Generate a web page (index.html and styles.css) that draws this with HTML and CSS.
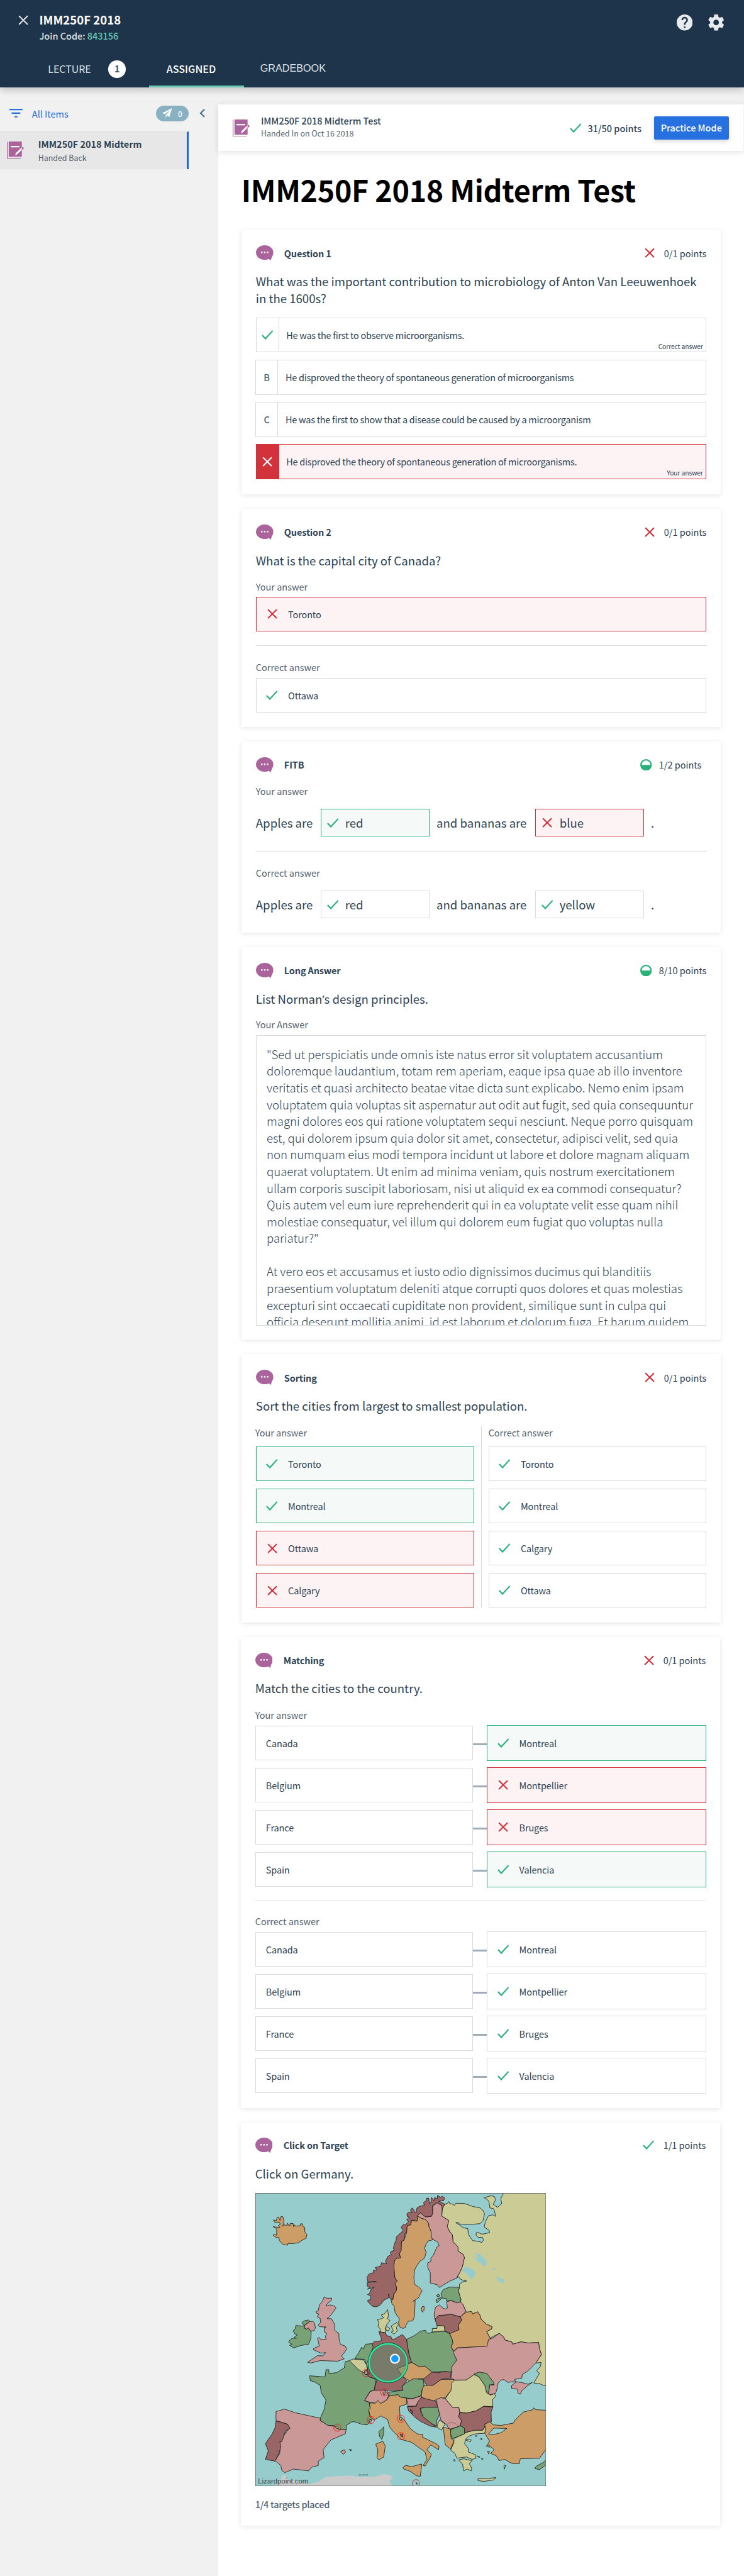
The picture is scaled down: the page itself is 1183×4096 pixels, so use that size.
FILE: index.html
```html
<!DOCTYPE html>
<html lang="en">
<head>
<meta charset="utf-8">
<title>IMM250F 2018 Midterm Test</title>
<link rel="stylesheet" href="styles.css">
</head>
<body>
<svg class="sprite" width="0" height="0" aria-hidden="true">
  <symbol id="cross" viewBox="0 0 28 28"><path d="M2 2 26 26M26 2 2 26" fill="none" stroke="currentColor" stroke-width="3.6"/></symbol>
  <symbol id="check" viewBox="0 0 32 26"><path d="M1.5 14 10.500 23.500 30.500 1.500" fill="none" stroke="currentColor" stroke-width="3.8"/></symbol>
  <symbol id="half" viewBox="0 0 32 32"><circle cx="16" cy="16" r="14" fill="#fff" stroke="currentColor" stroke-width="4"/><path d="M1 16H31A15 15 0 0 1 1 16Z" fill="currentColor"/></symbol>
  <symbol id="bubble" viewBox="0 0 48 42"><ellipse cx="24" cy="20" rx="24" ry="20" fill="#aa649b"/><path d="M34 36 40.500 42 46 26Z" fill="#aa649b"/><path d="M14 17.500h4v4h-4zM22 17.500h4v4h-4zM30 17.500h4v4h-4z" fill="#fff"/></symbol>
  <symbol id="quiz" viewBox="0 0 48 48"><rect x="5" width="36" height="42" rx="1" fill="#aa649b"/><path d="M1 1V46.500H38" fill="none" stroke="#aa649b" stroke-width="2"/><path d="M10.500 14H34.500" stroke="#fff" stroke-width="4"/><path d="M22.500 38 24.500 32 41 15.500V22.500L27.500 36Z" fill="#fff"/><path d="M41 16.500 43.500 14.500 47 18 41 24Z" fill="#aa649b"/></symbol>
</svg>

<header class="top">
  <div class="brand">
    <svg class="close"><use href="#cross"/></svg>
    <div class="course">
      <div class="course-name">IMM250F 2018</div>
      <div class="join">Join Code: <span class="code">843156</span></div>
    </div>
    <svg class="top-icon" viewBox="2 2 20 20"><path fill="currentColor" d="M12 2C6.480 2 2 6.480 2 12s4.480 10 10 10 10-4.480 10-10S17.520 2 12 2zm1 17h-2v-2h2v2zm2.070-7.750l-.9.920C13.450 12.900 13 13.500 13 15h-2v-.5c0-1.100.45-2.100 1.170-2.830l1.240-1.260c.37-.36.59-.86.59-1.410 0-1.100-.9-2-2-2s-2 .9-2 2H8c0-2.210 1.790-4 4-4s4 1.790 4 4c0 .88-.36 1.680-.93 2.250z"/></svg>
    <svg class="top-icon" viewBox="2 2 20 20"><path fill="currentColor" d="M19.430 12.980c.04-.32.07-.64.07-.98s-.03-.66-.07-.98l2.110-1.650c.19-.15.24-.42.12-.64l-2-3.460c-.12-.22-.39-.3-.61-.22l-2.490 1c-.52-.4-1.080-.73-1.690-.98l-.38-2.650C14.460 2.180 14.250 2 14 2h-4c-.25 0-.46.18-.49.42l-.38 2.650c-.61.25-1.170.59-1.690.98l-2.490-1c-.23-.09-.49 0-.61.22l-2 3.460c-.13.22-.07.49.12.64l2.110 1.650c-.04.32-.07.65-.07.98s.03.66.07.98l-2.110 1.650c-.19.15-.24.42-.12.64l2 3.460c.12.22.39.3.61.22l2.490-1c.52.4 1.080.73 1.690.98l.38 2.650c.03.24.24.42.49.42h4c.25 0 .46-.18.49-.42l.38-2.650c.61-.25 1.170-.59 1.690-.98l2.490 1c.23.09.49 0 .61-.22l2-3.460c.12-.22.07-.49-.12-.64l-2.110-1.650zM12 15.500c-1.930 0-3.500-1.570-3.500-3.500s1.570-3.500 3.500-3.500 3.500 1.570 3.500 3.500-1.570 3.500-3.500 3.500z"/></svg>
  </div>
  <nav class="tabs">
    <div class="tab tab-lecture">LECTURE<span class="count">1</span></div>
    <div class="tab tab-assigned">ASSIGNED</div>
    <div class="tab tab-grade">GRADEBOOK</div>
  </nav>
</header>

<div class="body">
  <aside class="side">
    <div class="filter">
      <svg class="filter-icon" viewBox="0 0 36 24"><path fill="#2670e0" d="M0 0h36v4H0zM6 10h24v4H6zM14 20h8v4h-8z"/></svg>
      <span class="filter-label">All Items</span>
      <span class="pill"><svg class="plane" viewBox="0 0 28 28"><path fill="#fff" d="M28 0 0 14 7 17 24 5 11 18.500 20 25Z M9 18 13 20.500 10.500 28Z"/></svg>0</span>
      <svg class="chev" viewBox="0 0 16 24"><path d="M14 1.500 3.500 12 14 22.500" fill="none" stroke="#4b7690" stroke-width="4"/></svg>
    </div>
    <div class="item">
      <svg class="quiz-icon"><use href="#quiz"/></svg>
      <div>
        <div class="item-name">IMM250F 2018 Midterm</div>
        <div class="item-sub">Handed Back</div>
      </div>
    </div>
  </aside>

  <main class="main">
    <div class="docbar">
      <svg class="quiz-icon"><use href="#quiz"/></svg>
      <div class="doc-info">
        <div class="doc-name">IMM250F 2018 Midterm Test</div>
        <div class="doc-sub">Handed In on Oct 16 2018</div>
      </div>
      <svg class="check"><use href="#check"/></svg>
      <span class="doc-points">31/50 points</span>
      <span class="button">Practice Mode</span>
    </div>
    <div class="page">
      <h1 class="title">IMM250F 2018 Midterm Test</h1>

      <section class="card card-choice">
        <div class="head"><svg class="bubble"><use href="#bubble"/></svg><span class="name">Question 1</span><svg class="cross"><use href="#cross"/></svg><span class="points">0/1 points</span></div>
        <p class="question">What was the important contribution to microbiology of Anton Van Leeuwenhoek<br>in the 1600s?</p>
        <div class="options">
          <div class="option"><span class="key"><svg class="check"><use href="#check"/></svg></span><span class="option-text">He was the first to observe microorganisms.</span><span class="note">Correct answer</span></div>
          <div class="option option-plain"><span class="key">B</span><span class="option-text">He disproved the theory of spontaneous generation of microorganisms</span></div>
          <div class="option option-plain"><span class="key">C</span><span class="option-text">He was the first to show that a disease could be caused by a microorganism</span></div>
          <div class="option option-wrong"><span class="key"><svg class="cross"><use href="#cross"/></svg></span><span class="option-text">He disproved the theory of spontaneous generation of microorganisms.</span><span class="note">Your answer</span></div>
        </div>
      </section>

      <section class="card card-short">
        <div class="head"><svg class="bubble"><use href="#bubble"/></svg><span class="name">Question 2</span><svg class="cross"><use href="#cross"/></svg><span class="points">0/1 points</span></div>
        <p class="question">What is the capital city of Canada?</p>
        <div class="label label-first">Your answer</div>
        <div class="box wrong"><svg class="cross"><use href="#cross"/></svg>Toronto</div>
        <div class="rule"></div>
        <div class="label">Correct answer</div>
        <div class="box"><svg class="check"><use href="#check"/></svg>Ottawa</div>
      </section>

      <section class="card card-fitb">
        <div class="head"><svg class="bubble"><use href="#bubble"/></svg><span class="name">FITB</span><svg class="half"><use href="#half"/></svg><span class="points points-part">1/2 points</span></div>
        <div class="label label-fitb">Your answer</div>
        <div class="blanks"><span>Apples are</span><span class="blank right"><svg class="check"><use href="#check"/></svg>red</span><span class="mid">and bananas are</span><span class="blank wrong"><svg class="cross"><use href="#cross"/></svg>blue</span><span class="mid">.</span></div>
        <div class="rule rule-fitb"></div>
        <div class="label">Correct answer</div>
        <div class="blanks"><span>Apples are</span><span class="blank"><svg class="check"><use href="#check"/></svg>red</span><span class="mid">and bananas are</span><span class="blank"><svg class="check"><use href="#check"/></svg>yellow</span><span class="mid">.</span></div>
      </section>

      <section class="card card-long">
        <div class="head"><svg class="bubble"><use href="#bubble"/></svg><span class="name">Long Answer</span><svg class="half"><use href="#half"/></svg><span class="points points-part">8/10 points</span></div>
        <p class="question">List Norman<span class="apos">’</span>s design principles.</p>
        <div class="label label-first">Your Answer</div>
        <div class="essay">"Sed ut perspiciatis unde omnis iste natus error sit voluptatem accusantium<br>doloremque laudantium, totam rem aperiam, eaque ipsa quae ab illo inventore<br>veritatis et quasi architecto beatae vitae dicta sunt explicabo. Nemo enim ipsam<br>voluptatem quia voluptas sit aspernatur aut odit aut fugit, sed quia consequuntur<br>magni dolores eos qui ratione voluptatem sequi nesciunt. Neque porro quisquam<br>est, qui dolorem ipsum quia dolor sit amet, consectetur, adipisci velit, sed quia<br>non numquam eius modi tempora incidunt ut labore et dolore magnam aliquam<br>quaerat voluptatem. Ut enim ad minima veniam, quis nostrum exercitationem<br>ullam corporis suscipit laboriosam, nisi ut aliquid ex ea commodi consequatur?<br>Quis autem vel eum iure reprehenderit qui in ea voluptate velit esse quam nihil<br>molestiae consequatur, vel illum qui dolorem eum fugiat quo voluptas nulla<br>pariatur?"<br><br>At vero eos et accusamus et iusto odio dignissimos ducimus qui blanditiis<br>praesentium voluptatum deleniti atque corrupti quos dolores et quas molestias<br>excepturi sint occaecati cupiditate non provident, similique sunt in culpa qui<br>officia deserunt mollitia animi, id est laborum et dolorum fuga. Et harum quidem</div>
      </section>

      <section class="card card-sort">
        <div class="head"><svg class="bubble"><use href="#bubble"/></svg><span class="name">Sorting</span><svg class="cross"><use href="#cross"/></svg><span class="points">0/1 points</span></div>
        <p class="question">Sort the cities from largest to smallest population.</p>
        <div class="columns">
          <div class="column">
            <div class="label label-out">Your answer</div>
            <div class="box right"><svg class="check"><use href="#check"/></svg>Toronto</div>
            <div class="box right"><svg class="check"><use href="#check"/></svg>Montreal</div>
            <div class="box wrong"><svg class="cross"><use href="#cross"/></svg>Ottawa</div>
            <div class="box wrong"><svg class="cross"><use href="#cross"/></svg>Calgary</div>
          </div>
          <div class="split"></div>
          <div class="column">
            <div class="label">Correct answer</div>
            <div class="box"><svg class="check"><use href="#check"/></svg>Toronto</div>
            <div class="box"><svg class="check"><use href="#check"/></svg>Montreal</div>
            <div class="box"><svg class="check"><use href="#check"/></svg>Calgary</div>
            <div class="box"><svg class="check"><use href="#check"/></svg>Ottawa</div>
          </div>
        </div>
      </section>

      <section class="card card-match">
        <div class="head"><svg class="bubble"><use href="#bubble"/></svg><span class="name">Matching</span><svg class="cross"><use href="#cross"/></svg><span class="points">0/1 points</span></div>
        <p class="question">Match the cities to the country.</p>
        <div class="label label-match">Your answer</div>
        <div class="pairs">
          <div class="pair"><div class="box">Canada</div><div class="link"></div><div class="box right"><svg class="check"><use href="#check"/></svg>Montreal</div></div>
          <div class="pair"><div class="box">Belgium</div><div class="link"></div><div class="box wrong"><svg class="cross"><use href="#cross"/></svg>Montpellier</div></div>
          <div class="pair"><div class="box">France</div><div class="link"></div><div class="box wrong"><svg class="cross"><use href="#cross"/></svg>Bruges</div></div>
          <div class="pair"><div class="box">Spain</div><div class="link"></div><div class="box right"><svg class="check"><use href="#check"/></svg>Valencia</div></div>
        </div>
        <div class="rule rule-match"></div>
        <div class="label label-match2">Correct answer</div>
        <div class="pairs">
          <div class="pair"><div class="box">Canada</div><div class="link"></div><div class="box"><svg class="check"><use href="#check"/></svg>Montreal</div></div>
          <div class="pair"><div class="box">Belgium</div><div class="link"></div><div class="box"><svg class="check"><use href="#check"/></svg>Montpellier</div></div>
          <div class="pair"><div class="box">France</div><div class="link"></div><div class="box"><svg class="check"><use href="#check"/></svg>Bruges</div></div>
          <div class="pair"><div class="box">Spain</div><div class="link"></div><div class="box"><svg class="check"><use href="#check"/></svg>Valencia</div></div>
        </div>
      </section>

      <section class="card card-target">
        <div class="head"><svg class="bubble"><use href="#bubble"/></svg><span class="name">Click on Target</span><svg class="check"><use href="#check"/></svg><span class="points">1/1 points</span></div>
        <p class="question">Click on Germany.</p>
        <svg class="map" viewBox="36 42 2400 2420" preserveAspectRatio="none">
          <rect x="36" y="42" width="2400" height="2420" fill="#97cccc"/>
          <g class="land">
            <path class="k" d="M2085 42 2072 70 2062 90 2070 130 2036 160 2005 140 1998 135 2020 100 2010 72 1985 65 1960 70 1925 82 1950 95 1965 115 1972 165 2000 170 2010 190 2020 235 1995 222 1960 230 1935 280 1925 322 1965 350 1970 368 1945 375 1905 382 1870 365 1860 370 1858 390 1875 408 1910 408 1920 430 1905 450 1870 440 1830 435 1805 400 1793 375 1790 335 1755 330 1720 305 1690 287 1712 283 1720 298 1800 302 1890 295 1915 270 1928 215 1915 185 1890 165 1830 153 1760 128 1690 127 1680 145 1665 135 1640 128 1633 112 1625 125 1600 135 1580 165 1575 232 1632 268 1620 320 1640 360 1663 388 1668 450 1690 465 1710 490 1708 520 1750 548 1762 575 1745 650 1720 705 1695 745 1715 732 1725 750 1745 760 1780 768 1750 775 1720 795 1722 820 1712 850 1733 920 1730 940 1748 960 1775 1020 1785 1030 1820 1020 1830 1040 1870 1022 1890 1050 1900 1085 1945 1125 1990 1145 1985 1165 1945 1185 1975 1240 2000 1225 2050 1200 2085 1230 2096 1255 2152 1270 2160 1290 2231 1270 2287 1280 2374 1275 2382 1330 2398 1375 2350 1445 2395 1440 2390 1470 2358 1510 2382 1530 2334 1610 2382 1615 2414 1630 2440 1630V38H2085Z"/>
            <path class="m" d="M1575 180 1600 135 1575 120 1550 110 1590 105 1600 85 1580 68 1565 78 1540 62 1538 90 1515 80 1510 105 1490 78 1485 120 1472 130 1468 85 1450 85 1447 105 1425 120 1430 145 1395 150 1370 165 1365 200 1350 200 1345 180 1330 165 1315 185 1330 205 1300 200 1287 215 1290 235 1305 240 1285 265 1300 278 1280 300 1255 305 1240 325 1255 350 1240 370 1225 380 1200 405 1198 430 1185 460 1175 500 1185 512 1150 530 1158 550 1130 565 1110 605 1120 625 1100 625 1080 615 1070 645 1025 658 1040 675 1010 682 1010 700 975 710 957 740 965 775 1035 773 960 780 960 810 980 820 962 835 1015 822 985 845 980 870 962 880 990 890 985 925 965 925 965 940 1000 975 1030 982 1060 972 1100 925 1140 905 1135 875 1142 905 1172 922 1178 880 1200 850 1203 820 1188 790 1208 770 1188 740 1180 650 1185 600 1205 580 1235 578 1225 540 1240 520 1243 440 1260 435 1275 370 1285 370 1290 320 1320 305 1325 265 1372 275 1375 235 1395 205 1440 240 1490 235 1500 210 1500 145 1535 122 1575 145Z"/>
            <path class="o" d="M1372 275 1325 268 1320 305 1290 310 1285 370 1262 435 1243 440 1240 520 1225 540 1235 578 1205 580 1185 600 1180 650 1188 740 1208 770 1188 790 1203 820 1200 850 1178 880 1172 922 1155 920 1165 960 1180 970 1190 1030 1225 1080 1218 1110 1230 1150 1255 1160 1275 1150 1280 1130 1300 1100 1335 1098 1350 1060 1355 930 1338 935 1385 905 1395 880 1413 850 1390 822 1350 795 1345 740 1350 680 1365 650 1395 605 1432 580 1447 530 1432 500 1445 465 1462 438 1505 427 1487 400 1487 360 1470 320 1465 290 1440 260 1405 250 1375 230ZM1415 978 1430 980 1428 1010 1415 1026 1405 1000Z"/>
            <path class="p" d="M1375 230 1395 205 1410 215 1440 240 1490 235 1500 210 1500 145 1520 138 1535 122 1550 132 1575 145 1578 170 1575 232 1632 268 1620 320 1640 360 1663 388 1668 450 1690 465 1710 490 1708 520 1750 548 1762 575 1745 650 1720 705 1695 745 1640 770 1590 800 1555 822 1540 800 1480 785 1480 700 1460 660 1458 620 1485 605 1485 580 1505 555 1525 510 1535 485 1553 478 1540 445 1500 425 1487 400 1487 360 1470 320 1465 290 1440 260 1405 250Z"/>
            <path class="o" d="M262 318 275 305 298 310 300 290 312 310 322 310 322 295 347 293 352 320 358 305 370 315 405 312 410 296 425 296 430 320 443 325 445 365 462 385 455 415 420 432 395 452 340 460 305 458 303 472 265 468 235 435 230 410 205 408 182 390 195 385 212 390 212 340 200 327 182 320 220 325 240 325 225 312 242 300 235 283 195 283 185 265 210 270 215 245 228 240 240 268 248 237 262 237 272 270 270 290Z"/>
            <path class="g" d="M370 1135 420 1140 440 1138 445 1160 462 1165 475 1155 497 1185 495 1240 476 1290 413 1300 353 1320 318 1300 338 1290 313 1275 313 1262 341 1240 375 1240 355 1235 383 1210 362 1205 348 1180 365 1160ZM420 1115 435 1098 475 1090 485 1100 440 1135Z"/>
            <path class="p" d="M605 898 625 910 667 910 662 930 625 960 625 975 650 965 690 975 703 990 655 1055 628 1078 665 1080 690 1125 692 1175 725 1200 728 1250 738 1290 778 1305 791 1330 746 1390 770 1410 715 1430 572 1425 492 1445 468 1438 548 1385 595 1385 616 1358 580 1365 516 1335 516 1325 564 1305 550 1240 565 1235 575 1250 620 1250 615 1225 625 1200 605 1190 605 1150 620 1148 570 1145 553 1135 575 1110 570 1075 548 1065 560 1040 537 1032 540 1018 555 1015 565 965 590 935ZM440 1138 480 1105 510 1100 525 1115 532 1155 520 1178 490 1180 475 1155 462 1165 445 1160Z"/>
            <path class="k" d="M1128 1005 1135 1050 1128 1080 1148 1095 1125 1120 1110 1150 1110 1195 1070 1190 1065 1160 1048 1145 1055 1115 1045 1085 1075 1080 1095 1070 1075 1048 1100 1040ZM1112 1158 1128 1145 1145 1160 1135 1180 1118 1175ZM1205 1110 1218 1130 1200 1150 1208 1180 1180 1207 1158 1190 1175 1180 1158 1140 1180 1125Z"/>
            <path class="g" d="M1640 818 1722 820 1712 850 1733 920 1730 940 1700 948 1650 928 1615 935 1610 912 1580 910 1568 870 1590 838ZM1530 890 1545 877 1558 885 1550 902ZM1528 920 1570 905 1575 912 1550 935 1535 950Z"/>
            <path class="p" d="M1615 940 1650 930 1700 948 1730 940 1748 960 1775 1020 1728 1065 1650 1042 1600 1050 1550 1052 1517 1085 1512 1040 1523 985 1555 965 1585 992 1605 1000 1622 990Z"/>
            <path class="m" d="M1550 1052 1600 1050 1650 1042 1728 1065 1740 1090 1712 1130 1718 1170 1650 1203 1600 1180 1595 1140 1535 1135 1520 1085Z"/>
            <path class="k" d="M1495 1190 1497 1160 1535 1160 1537 1135 1595 1140 1600 1183Z"/>
            <path class="o" d="M1775 1025 1820 1020 1830 1040 1870 1022 1890 1050 1900 1085 1945 1125 1990 1145 1985 1165 1945 1185 1975 1240 1953 1305 1890 1310 1699 1320 1675 1350 1651 1310 1667 1280 1660 1250 1640 1203 1718 1170 1712 1130 1740 1090 1728 1065Z"/>
            <path class="m" d="M1055 1185 1075 1190 1110 1195 1120 1220 1155 1225 1160 1245 1180 1250 1240 1215 1250 1210 1285 1250 1302 1360 1326 1440 1215 1492 1246 1550 1286 1590 1246 1640 1254 1670 1112 1670 1016 1668 1040 1580 977 1560 961 1510 969 1430 1000 1290 1016 1270 1080 1260 1075 1240Z"/>
            <path class="g" d="M1285 1250 1350 1218 1400 1182 1440 1175 1450 1195 1470 1200 1495 1190 1600 1183 1640 1203 1660 1250 1667 1280 1651 1310 1675 1355 1699 1420 1660 1480 1655 1520 1600 1515 1493 1520 1437 1470 1397 1480 1326 1440 1302 1360Z"/>
          </g>
          <path fill="#97cccc" d="M1760 650 1800 655 1850 690 1848 725 1815 758 1790 720 1745 685ZM1848 533 1900 555 1945 605 1945 635 1928 650 1900 620 1865 605 1842 568 1880 585ZM1990 665 2005 660 2018 672 2000 682ZM2030 730 2060 745 2095 765 2090 787 2040 770Z"/>
          <g class="land" transform="matrix(1.588 0 0 1 0 1230)">
            <path class="a" d="M120 1228 150 1195 165 1145 180 1140 185 1170 230 1190 300 1215 350 1195 390 1155 430 1150 520 1145 560 1155 640 1155 690 1130 725 1145 740 1150 720 1190 735 1232H120Z"/>
            <path class="p" d="M1227 75 1235 20 1255 10 1291 -30 1313 0 1320 25 1355 40 1360 60 1405 40 1440 50 1495 45 1500 100 1510 145 1480 215 1440 280 1410 310 1408 340 1370 350 1375 370 1355 370 1335 375 1315 352 1300 355 1285 380 1280 420 1272 465 1235 480 1240 395 1265 395 1225 320 1185 290 1160 310 1120 355 1060 355 1038 340 1045 290 1042 250 1070 190 1050 125 1075 90 1190 80ZM1355 400 1380 370 1405 375 1440 390 1462 375 1440 400 1410 440 1400 472 1388 465 1385 430 1355 425Z"/>
            <path class="g" d="M1160 305 1185 290 1225 300 1262 375 1262 392 1240 395 1235 470 1225 460 1215 400 1185 330Z"/>
            <path class="g" d="M512 195 550 245 585 290 615 330 640 345 650 355 640 438 618 450 590 525 615 540 620 590 612 610 620 660 635 665 605 725 575 720 540 700 525 700 495 730 495 765 460 765 430 730 400 730 360 690 360 670 380 600 390 520 365 460 360 400 330 370 308 360 305 320 385 330 390 270 405 270 405 300 445 295 485 255 490 205Z"/>
            <path class="g" d="M540 180 560 130 575 85 585 100 595 60 630 55 635 80 610 190 600 225 590 185 545 180Z"/>
            <path class="k" d="M512 195 530 182 585 190 600 230 605 270 585 295 555 265Z"/>
            <path class="p" d="M590 280 600 275 608 310 592 308Z"/>
            <path class="p" d="M130 615 175 595 230 625 330 660 360 670 360 690 400 730 430 735 460 765 495 765 490 800 415 850 375 930 380 995 350 1025 350 1060 315 1075 300 1105 220 1090 175 1120 160 1100 155 1060 125 1020 150 960 150 860 200 750 190 720 150 700 130 690Z"/>
            <path class="m" d="M130 695 150 700 190 720 203 755 180 775 160 865 150 865 155 910 145 960 125 1025 75 1010 90 940 75 880 110 800 125 750Z"/>
            <path class="o" d="M615 545 645 545 660 525 675 548 705 520 720 485 765 475 775 495 810 505 808 555 772 575 775 660 800 690 830 760 865 800 895 805 890 825 960 880 978 900 975 930 935 890 915 930 938 970 930 1000 905 1065 895 1060 915 1010 905 950 880 920 835 870 780 845 740 780 720 740 710 680 675 652 640 685 620 660 612 600 620 590ZM790 1075 805 1060 835 1070 888 1048 880 1150 860 1145 830 1110 795 1090ZM648 885 685 860 698 900 690 990 665 1015 655 995 660 930Z"/>
            <path class="p" d="M590 525 620 450 640 440 690 438 710 460 715 485 705 520 675 548 660 525 645 545 620 540Z"/>
            <path class="o" d="M760 262 835 210 875 245 905 240 940 290 925 340 870 345 825 365 785 320Z"/>
            <path class="g" d="M785 410 805 380 825 362 845 345 895 350 900 400 890 430 885 485 835 510 775 495 765 475 720 488 715 455 790 440Z"/>
            <path class="m" d="M895 350 940 290 970 295 1010 285 1040 290 1038 340 990 350 945 400 915 405Z"/>
            <path class="o" d="M900 400 945 400 990 350 1055 350 1058 357 1040 440 1010 500 960 520 935 535 885 495 890 430Z"/>
            <path class="p" d="M808 510 840 510 885 485 885 505 855 570 818 572Z"/>
            <path class="m" d="M865 540 885 500 960 530 968 560 972 578 905 580 880 590 885 640 935 710 965 745 930 735 880 695 850 660 820 610 812 575 860 572ZM828 600 840 610 836 635Z"/>
            <path class="g" d="M880 590 905 580 975 580 980 640 965 690 965 735 940 715 895 660Z"/>
            <path class="k" d="M1058 357 1120 355 1160 310 1185 330 1215 400 1225 460 1245 480 1265 468 1272 485 1265 500 1255 520 1258 575 1210 572 1170 610 1120 628 1085 620 1080 580 1050 585 1010 510 1040 440 1042 380Z"/>
            <path class="p" d="M965 515 990 500 1010 510 1050 585 1080 580 1085 620 1080 660 1095 690 1088 730 1068 745 1030 762 1018 725 988 690 980 640 975 600 968 560Z"/>
            <path fill="none" opacity=".4" d="M1018 725 1035 702 1055 710 1073 725"/>
            <path class="m" d="M1085 625 1120 628 1170 610 1210 572 1258 578 1248 620 1250 700 1225 710 1205 770 1165 770 1112 790 1108 750 1088 730 1095 690 1080 660Z"/>
            <path class="k" d="M968 725 980 685 1010 720 1000 740 990 770 968 745Z"/>
            <path class="o" d="M1000 745 1038 760 1040 835 1055 860 1038 925 1010 890 1005 820Z"/>
            <path class="g" d="M1038 765 1068 745 1090 732 1110 755 1110 800 1080 820 1045 838 1038 800Z"/>
            <path class="k" d="M1112 790 1165 770 1205 770 1218 735 1220 770 1215 795 1165 800 1130 820 1115 845 1145 850 1140 865 1115 850 1110 880 1130 920 1130 950 1165 970 1170 1000 1150 1010 1120 990 1070 1000 1060 960 1038 935 1055 870 1055 838 1080 820 1110 800ZM1080 1015 1105 1005 1150 1020 1135 1045 1148 1085 1145 1105 1125 1090 1105 1105 1100 1050ZM1180 1168 1230 1168 1275 1160 1260 1180 1210 1192 1180 1185ZM1222 900 1235 890 1240 910ZM1230 942 1240 945 1235 965ZM1315 1060 1325 1060 1316 1092ZM1165 815 1176 815 1172 822ZM1195 835 1203 845 1196 850ZM1055 1008 1062 1020 1056 1026ZM1175 980 1190 992 1180 990ZM1198 998 1207 1008 1200 1010Z"/>
            <path class="o" d="M1215 720 1240 700 1260 725 1300 730 1365 710 1370 690 1415 620 1465 600 1470 585 1480 600 1537 605 1537 920 1500 1000 1400 1005 1395 1045 1360 1045 1340 1030 1320 1010 1290 1020 1275 980 1245 960 1265 930 1230 885 1240 860 1225 820 1215 790 1220 770Z"/>
            <path fill="#97cccc" d="M1235 800 1262 752 1330 755 1300 790 1255 808Z"/>
            <path class="g" d="M1475 1085 1485 1065 1520 1035 1537 1010V1050L1500 1095ZM665 780 690 742 690 800 680 845 668 820Z"/>
            <path class="p" d="M465 945 485 930 492 950 480 970ZM510 928 523 930 520 940Z"/>
            <path class="k" d="M440 740 450 735 455 755 445 757ZM686 455 698 455 696 474 688 474ZM772 665 785 665 783 688 774 686ZM858 1200 867 1212 862 1216Z"/>
            <path class="p" d="M614 682 628 684 622 704 614 698Z"/><path class="m" d="M775 803 788 800 790 825 780 820Z"/>
            <g class="mark"><ellipse cx="597" cy="298" rx="19" ry="30"/><ellipse cx="693" cy="457" rx="19" ry="30"/><ellipse cx="449" cy="748" rx="19" ry="30"/><ellipse cx="623" cy="685" rx="19" ry="30"/><ellipse cx="779" cy="675" rx="19" ry="30"/><ellipse cx="779" cy="819" rx="19" ry="30"/><ellipse cx="858" cy="1207" rx="19" ry="30"/></g>
            <path d="M560 1138h14m5 0h12m5 0h12" fill="none"/>
          </g>
          <circle cx="1132" cy="1443" r="158" fill="#469c74" fill-opacity=".4" stroke="#28614a" stroke-width="20"/>
          <circle cx="1132" cy="1443" r="156" fill="none" stroke="#2fe89e" stroke-width="13"/>
          <circle cx="1188" cy="1410" r="36" fill="#1a9aff" stroke="#fff" stroke-width="11"/>
          <text class="credit" x="58" y="2438" textLength="415" lengthAdjust="spacingAndGlyphs">Lizardpoint.com</text>
          <rect x="38" y="44" width="2396" height="2416" fill="none" stroke="#666" stroke-width="5"/>
        </svg>
        <div class="placed">1/4 targets placed</div>
      </section>
    </div>
  </main>
</div>
</body>
</html>
```
FILE: styles.css
```css
/* 1rem = 10 layout units of a 1024-unit wide page */
html { font-size: 11.5576px; }
* { box-sizing: border-box; }
body {
  margin: 0;
  min-height: 4096px;
  display: flex;
  flex-direction: column;
  background: #fff;
  color: #2e4354;
  font-family: "Noto Sans CJK SC", "Noto Sans", sans-serif;
  font-size: 1.253rem;
  line-height: 2rem;
  white-space: nowrap;
}
svg { flex: none; display: block; }
.sprite { position: absolute; }
p, h1 { margin: 0; font-weight: 400; }

.cross { width: 1.4rem; height: 1.4rem; color: #d2323a; }
.check { width: 1.6rem; height: 1.3rem; color: #2bb27c; }
.half { width: 1.6rem; height: 1.6rem; color: #2bb27c; }
.quiz-icon { width: 2.4rem; height: 2.4rem; }

/* top bar */
.top {
  position: relative;
  z-index: 2;
  height: 12rem;
  background: #1e344b;
  color: #fff;
  box-shadow: 0 .4rem 1rem rgba(0, 0, 0, .2);
  display: flex;
  flex-direction: column;
  justify-content: space-between;
}
.brand { display: flex; padding: 2rem 2.7rem 0 2.5rem; }
.close { width: 1.4rem; height: 1.4rem; margin-top: .1rem; color: #dde1e4; }
.course { flex: 1; margin-left: 1.5rem; }
.course-name { font-size: 1.61rem; font-weight: 700; line-height: 2rem; margin-top: -.4rem; }
.join { color: #dde1e4; font-weight: 500; margin-top: .45rem; line-height: 1.8rem; }
.code { color: #68c9b5; }
.top-icon { width: 2.2rem; height: 2.2rem; color: #e8ebed; }
.top-icon + .top-icon { margin-left: 2.2rem; }
.tabs { display: flex; height: 5rem; line-height: 5rem; }
.tab { font-size: 1.4rem; }
.tab-lecture { width: 20.5rem; padding-left: 6.6rem; color: #dde1e4; display: flex; align-items: center; font-size: 1.38rem; }
.count { width: 2.4rem; height: 2.4rem; margin-left: 2.4rem; border-radius: 50%; background: #fff; color: #3d5668; font-size: 1.25rem; font-weight: 700; line-height: 2.3rem; text-align: center; }
.tab-assigned { width: 13.1rem; padding-left: 2.4rem; font-weight: 500; border-bottom: .3rem solid #68c9b5; }
.tab-grade { padding-left: 2.2rem; color: #dde1e4; font-family: "Liberation Sans", Arial, sans-serif; line-height: 4.8rem; }

.body { flex: 1; display: flex; }

/* side list */
.side { width: 30rem; flex: none; background: #f1f1f1; }
.filter { display: flex; align-items: center; height: 6.05rem; padding: 1.15rem 0 0 1.3rem; }
.filter-icon { width: 1.8rem; height: 1.2rem; }
.filter-label { margin-left: 1.3rem; width: 17.1rem; color: #2670e0; }
.pill { width: 4.5rem; height: 2.2rem; border-radius: 1.1rem; background: #8ab1c1; color: #fff; display: flex; align-items: center; font-size: 1.05rem; font-weight: 500; padding-left: .8rem; }
.plane { width: 1.35rem; height: 1.35rem; margin-right: .85rem; }
.chev { width: .8rem; height: 1.2rem; margin-left: 1.4rem; }
.item { width: 26rem; height: 5.25rem; border-top: 1px solid #dcdcdc; border-right: .3rem solid #1f66db; background: #e7e7e7; display: flex; padding: 1.35rem 0 0 .95rem; }
.item > div { margin-left: 1.9rem; }
.item-name { font-weight: 700; margin-top: -.75rem; line-height: 2rem; }
.item-sub { font-size: 1.074rem; color: #55636f; line-height: 2rem; }

/* document bar */
.main { flex: 1; min-width: 0; padding-top: 2.4rem; background: linear-gradient(#f1f1f1 2.4rem, #fff 2.4rem); }
.docbar { height: 6.4rem; margin-right: .1rem; background: #fff; box-shadow: 0 .2rem .8rem rgba(0, 0, 0, .13); display: flex; align-items: center; padding: 0 2rem; }
.doc-info { flex: 1; margin: -.3rem 0 0 1.5rem; }
.doc-name { font-weight: 500; line-height: 1.8rem; }
.doc-sub { font-size: 1.074rem; color: #55636f; line-height: 1.6rem; }
.doc-points { margin: 0 1.7rem 0 .9rem; font-weight: 500; }
.button { width: 10.3rem; height: 3.2rem; border-radius: .2rem; background: #2670e0; color: #fff; font-weight: 500; line-height: 3.2rem; text-align: center; box-shadow: 0 .2rem .6rem rgba(0, 0, 0, .14); }

.page { padding: 0 0 0 3.2rem; }
.title { height: 10.8rem; padding-top: 2.65rem; font-size: 4.03rem; line-height: 5.2rem; font-weight: 700; letter-spacing: -.026rem; color: #000; }

/* question cards */
.card { width: 66rem; margin-bottom: 2rem; padding: 0 2rem; background: #fff; box-shadow: 0 .2rem .7rem rgba(0, 0, 0, .11); }
.card-choice { height: 36.4rem; }
.card-short { height: 30rem; }
.card-fitb { height: 26.3rem; }
.card-long { height: 54rem; }
.card-sort { height: 36.9rem; }
.card-match { height: 64.8rem; margin-left: -.1rem; }
.card-target { height: 55.5rem; margin: 0 0 0 -.1rem; }
.head { display: flex; align-items: center; height: 5.95rem; padding-top: .45rem; }
.bubble { width: 2.4rem; height: 2.1rem; }
.name { flex: 1; margin-left: 1.5rem; font-weight: 700; letter-spacing: -.012rem; }
.points { margin-left: 1.25rem; }
.points-part { width: 6.55rem; margin-left: .95rem; }
.question { font-size: 1.61rem; line-height: 2.3rem; }
.apos { font-family: "Open Sans", "Noto Sans", sans-serif; line-height: 1; }

.options { display: grid; gap: 1rem; margin-top: 1.55rem; }
.option { height: 4.8rem; border: 1px solid #d7dbe0; display: flex; align-items: center; padding-right: .4rem; }
.option-plain { margin-left: -.1rem; }
.key { width: 3.1rem; align-self: stretch; border-right: 1px solid #d7dbe0; display: flex; align-items: center; justify-content: center; color: #4d6272; font-weight: 500; }
.option-text { flex: 1; margin-left: 1rem; letter-spacing: -.022rem; }
.note { align-self: flex-end; font-size: .895rem; line-height: 1.4rem; letter-spacing: -.01rem; }
.option-wrong { border-color: #d2323a; background: #fdf3f5; }
.option-wrong .key { background: #d2323a; border-color: #d2323a; }
.option-wrong .cross { color: #fff; }

.label { height: 2.45rem; color: #55636f; }
.label-first { margin-top: 1.4rem; }
.label-fitb { margin-top: -.1rem; }
.box { height: 4.8rem; border: 1px solid #d7dbe0; display: flex; align-items: center; padding-left: 1.4rem; letter-spacing: -.01rem; }
.box .cross { margin: 0 1.5rem 0 .05rem; }
.box .check { margin: 0 1.4rem 0 -.05rem; }
.wrong { border-color: #d2323a; background: #fdf3f5; }
.right { border-color: #2bb27c; background: #f5faf8; }
.rule { height: 1px; background: #d7dbe0; margin: 1.9rem 0; }
.rule-fitb { margin: 2rem 0 1.9rem; }

.blanks { display: grid; grid-template-columns: 8.9rem 15rem 14.5rem 15rem auto; margin-top: 1rem; height: 3.8rem; line-height: 3.8rem; font-size: 1.61rem; }
.mid { padding-left: .95rem; }
.blank { border: 1px solid #d7dbe0; display: flex; align-items: center; padding-left: .8rem; line-height: 3.6rem; }
.blank .check { margin-right: .9rem; }
.blank .cross { margin: 0 1rem 0 .1rem; }
.blank.wrong { border-color: #d2323a; }
.blank.right { border-color: #2bb27c; }

.essay { height: 40rem; border: 1px solid #d7dbe0; padding: 1.4rem 0 0 1.4rem; font-size: 1.61rem; line-height: 2.3rem; font-weight: 300; overflow: hidden; }

.columns { display: flex; margin-top: 1.5rem; }
.column { width: 30rem; display: grid; gap: 1rem; }
.column .label { height: 1.95rem; }
.label-out { margin-left: -.1rem; }
.split { width: 1px; margin: .1rem calc(1rem - .5px) 0; background: #d7dbe0; }

.label-match { height: 2.35rem; margin-top: 1.5rem; }
.label-match2 { height: 2.35rem; }
.pairs { display: grid; gap: .8rem; }
.pair { height: 5rem; display: grid; grid-template-columns: 30rem 1.9rem 30.2rem; align-items: center; }
.pair .box:last-child { height: 5rem; }
.link { height: .2rem; margin-top: .35rem; background: #a0abb8; }
.rule-match { margin: 1.8rem 0 1.75rem; }

.card-target .head { padding-top: .3rem; }
.map { width: 40rem; height: 40.35rem; margin-top: 1.45rem; }
.land path { stroke: #111; stroke-width: .8px; vector-effect: non-scaling-stroke; }
.land .a { fill: #cbcbcb; stroke: none; }
.k { fill: #cbcb95; }
.m { fill: #996565; }
.o { fill: #cc9d67; }
.p { fill: #cb9898; }
.g { fill: #78a276; }
.mark ellipse { fill: none; stroke: #f00; stroke-width: .8px; vector-effect: non-scaling-stroke; }
.credit { font-family: "Liberation Sans", Arial, sans-serif; font-size: 58px; fill: #444; }
.placed { margin-top: 1.5rem; font-weight: 500; color: #4f5f70; letter-spacing: -.022rem; }
```
